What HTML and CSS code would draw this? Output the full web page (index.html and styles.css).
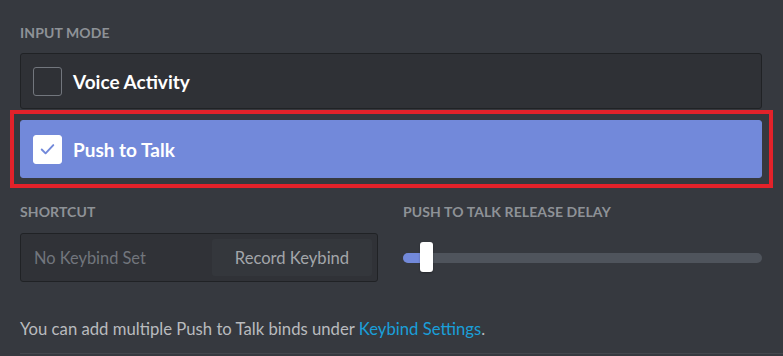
FILE: index.html
```html
<!DOCTYPE html>
<html>
<head>
<meta charset="utf-8">
<link rel="stylesheet" href="styles.css">
</head>
<body>
<div class="page">
  <h5 class="label">Input Mode</h5>
  <div class="options">
    <div class="option">
      <span class="checkbox"></span>
      <span class="option-text">Voice Activity</span>
    </div>
    <div class="highlight">
      <div class="option option-selected">
        <span class="checkbox checkbox-checked">
          <svg width="28" height="28" viewBox="0 0 28 28"><polyline points="8,14.5 12,18.5 20,10" fill="none" stroke="#7289da" stroke-width="2" stroke-linecap="round" stroke-linejoin="round"/></svg>
        </span>
        <span class="option-text">Push to Talk</span>
      </div>
    </div>
  </div>
  <div class="columns">
    <div class="col">
      <h5 class="label label-col">Shortcut</h5>
      <div class="keybind">
        <span class="keybind-value">No Keybind Set</span>
        <span class="keybind-btn">Record Keybind</span>
      </div>
    </div>
    <div class="col">
      <h5 class="label label-col">Push to Talk Release Delay</h5>
      <div class="slider">
        <div class="track">
          <div class="fill" style="width: 22px"></div>
          <div class="knob"></div>
        </div>
      </div>
    </div>
  </div>
  <p class="hint">You can add multiple Push to Talk binds under <a class="link">Keybind Settings</a>.</p>
  <div class="divider"></div>
</div>
</body>
</html>
```
FILE: styles.css
```css
html, body {
  margin: 0;
  padding: 0;
  background: #36393f;
  height: 100%;
  overflow: hidden;
}
body {
  font-family: Lato, "Open Sans", "Liberation Sans", sans-serif;
  color: #fff;
}
.page {
  padding: 25px 21px 0 20px;
}
.label {
  margin: 0 0 12px 0;
  font-size: 14px;
  line-height: 16px;
  font-weight: 700;
  text-transform: uppercase;
  color: #8e9297;
  letter-spacing: 0.1px;
}
.option {
  box-sizing: border-box;
  height: 56px;
  display: flex;
  align-items: center;
  gap: 11px;
  padding: 0 12px;
  background: #2f3136;
  border: 1px solid #202225;
  border-radius: 3px;
}
.checkbox {
  box-sizing: border-box;
  width: 29px;
  height: 29px;
  border: 1px solid #72767d;
  border-radius: 3px;
  display: flex;
  align-items: center;
  justify-content: center;
  flex: none;
}
.checkbox-checked {
  background: #fff;
  border-color: #fff;
}
.option-text {
  font-size: 19px;
  font-weight: 700;
  color: #fff;
}
.highlight {
  margin: 1px -11px 0 -10px;
  padding: 6px 7px 6px 6px;
  border: 4px solid #e3222a;
}
.option-selected {
  height: 58px;
  background: #7289da;
  border-color: #7289da;
}
.columns {
  display: grid;
  grid-template-columns: 358px 1fr;
  gap: 25px;
  margin-top: 16px;
}
.label-col {
  margin-bottom: 13px;
}
.keybind {
  box-sizing: border-box;
  height: 49px;
  display: flex;
  align-items: stretch;
  padding: 5px;
  background: #303237;
  border: 1px solid #202225;
  border-radius: 3px;
}
.keybind-value {
  flex: 1;
  display: flex;
  align-items: center;
  padding-left: 8px;
  font-size: 16.4px;
  color: #72767d;
}
.keybind-btn {
  width: 160px;
  display: flex;
  align-items: center;
  justify-content: center;
  background: #34373c;
  border-radius: 3px;
  font-size: 16.6px;
  color: #a3a6aa;
}
.slider {
  height: 49px;
  display: flex;
  align-items: center;
}
.track {
  position: relative;
  flex: 1;
  height: 10px;
  border-radius: 5px;
  background: #4f545c;
}
.fill {
  height: 100%;
  background: #7289da;
  border-radius: 5px 0 0 5px;
}
.knob {
  position: absolute;
  left: 17px;
  top: -11px;
  width: 13px;
  height: 30px;
  background: #fff;
  border-radius: 3px;
  box-shadow: 0 1px 2px rgba(0,0,0,0.3);
}
.hint {
  margin: 37px 0 14px 0;
  font-size: 16.7px;
  line-height: 20px;
  color: #b9bbbe;
}
.link {
  color: #1a9fd9;
}
.divider {
  height: 1px;
  background: #44474d;
  margin-right: -21px;
}
```
